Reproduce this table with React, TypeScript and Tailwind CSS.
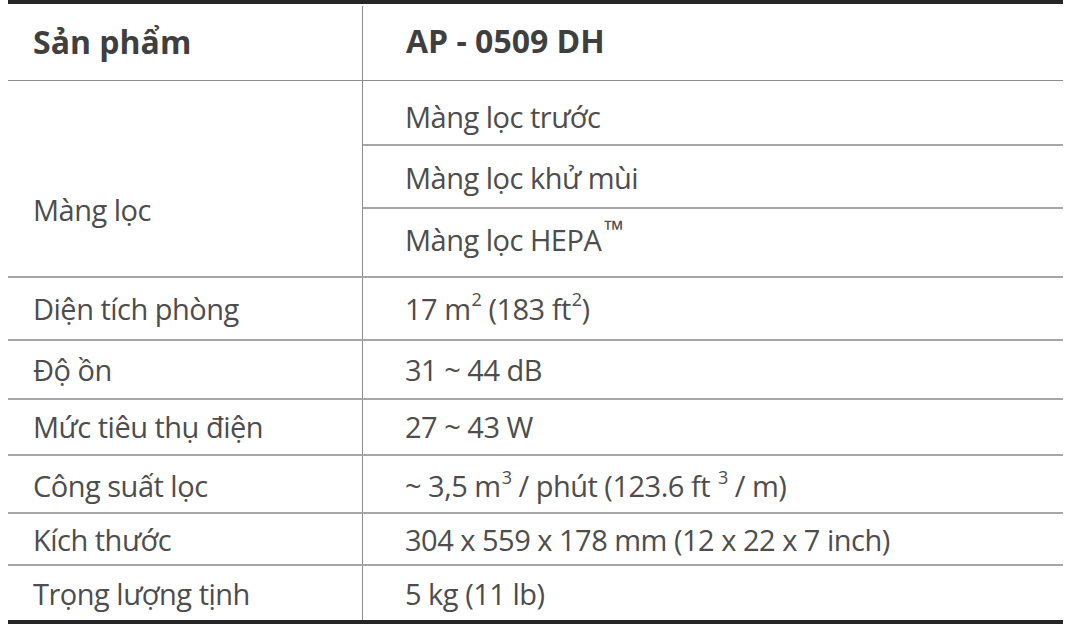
import React from 'react';

type Row = { label: string; value: React.ReactNode; h: string; shift?: string };

const Sup: React.FC<{ children: React.ReactNode }> = ({ children }) => (
    <sup className="text-[18px] top-[-0.75em] ml-[1px]">{children}</sup>
);

const rows: Row[] = [
    {
        label: 'Diện tích phòng',
        value: (
            <>
                17 m<Sup>2</Sup> (183 ft<Sup>2</Sup>)
            </>
        ),
        h: 'h-[63px]',
    },
    { label: 'Độ ồn', value: '31 ~ 44 dB', h: 'h-[59px]' },
    { label: 'Mức tiêu thụ điện', value: '27 ~ 43 W', h: 'h-[56px]' },
    {
        label: 'Công suất lọc',
        value: (
            <>
                ~ 3,5 m<Sup>3</Sup> / phút (123.6 ft <Sup>3</Sup> / m)
            </>
        ),
        h: 'h-[58px]',
        shift: 'pt-[4px]',
    },
    { label: 'Kích thước', value: '304 x 559 x 178 mm (12 x 22 x 7 inch)', h: 'h-[52px]', shift: 'pt-[2px]' },
    { label: 'Trọng lượng tịnh', value: '5 kg (11 lb)', h: 'h-[54px]', shift: 'pt-[2px]' },
];

const filters: { text: React.ReactNode; h: string; shift?: string }[] = [
    { text: 'Màng lọc trước', h: 'h-[65px]', shift: 'pt-[8px]' },
    { text: 'Màng lọc khử mùi', h: 'h-[63px]', shift: 'pt-[2px]' },
    {
        text: (
            <>
                Màng lọc HEPA<sup className="text-[26px] top-[-0.45em] ml-[3px]">™</sup>
            </>
        ),
        h: 'h-[67px]',
        shift: 'pb-[6px]',
    },
];

export default function App() {
    return (
        <div className="w-[1081px] h-[639px] bg-white font-['Open_Sans',sans-serif] text-[#4d4d4d]">
            <div className="ml-[8px] w-[1055px]">
                <div className="h-[4px] bg-[#262626]" />

                {/* header */}
                <div className="grid grid-cols-[355px_700px] h-[77px] border-b border-[#8c8c8c] text-[32px] font-bold text-[#3f3f3f]">
                    <div className="flex items-center pl-[25px] pb-[2px] border-r border-[#8c8c8c] mt-[2px]">Sản phẩm</div>
                    <div className="flex items-center pl-[43px] pb-[2px]">AP - 0509 DH</div>
                </div>

                <div className="text-[29px] tracking-[-0.5px]">
                    {/* filter group */}
                    <div className="grid grid-cols-[355px_700px] border-b-2 border-[#a6a6a6]">
                        <div className="flex items-center pl-[25px] pt-[62px] border-r border-[#8c8c8c]">Màng lọc</div>
                        <div className="flex flex-col">
                            {filters.map((f, i) => (
                                <div
                                    key={i}
                                    className={`flex items-center pl-[42px] ${f.h} ${f.shift ?? ''} ${
                                        i < filters.length - 1 ? 'border-b-2 border-[#a6a6a6]' : ''
                                    }`}
                                >
                                    <span>{f.text}</span>
                                </div>
                            ))}
                        </div>
                    </div>

                    {rows.map((r, i) => (
                        <div
                            key={i}
                            className={`grid grid-cols-[355px_700px] ${r.h} ${
                                i < rows.length - 1 ? 'border-b-2 border-[#a6a6a6]' : ''
                            }`}
                        >
                            <div className={`flex items-center pl-[25px] border-r border-[#8c8c8c] ${r.shift ?? ''}`}>
                                {r.label}
                            </div>
                            <div className={`flex items-center pl-[42px] ${r.shift ?? ''}`}>
                                <span>{r.value}</span>
                            </div>
                        </div>
                    ))}
                </div>

                <div className="h-[4px] bg-[#262626]" />
            </div>
        </div>
    );
}
